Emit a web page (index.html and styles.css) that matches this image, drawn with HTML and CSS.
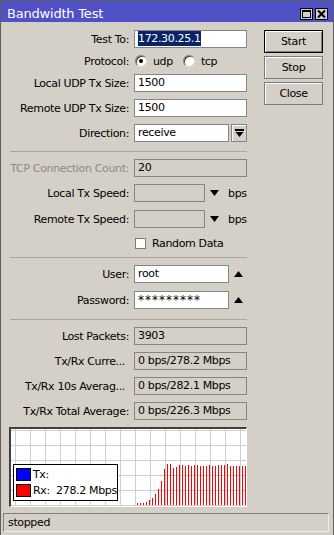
FILE: index.html
```html
<!DOCTYPE html>
<html>
<head>
<meta charset="utf-8">
<link rel="stylesheet" href="styles.css">
</head>
<body>
<div class="window">
  <div class="titlebar">
    <span class="title">Bandwidth Test</span>
    <div class="tbtns">
      <span class="tbtn"><svg width="11" height="10" viewBox="0 0 11 10"><rect x="1.5" y="1.5" width="8" height="7" fill="none" stroke="#000" stroke-width="1"/><rect x="1" y="1" width="9" height="2" fill="#000"/></svg></span>
      <span class="tbtn"><svg width="11" height="10" viewBox="0 0 11 10"><path d="M2 1.5 L9 8.5 M9 1.5 L2 8.5" stroke="#000" stroke-width="2"/></svg></span>
    </div>
  </div>
  <div class="body">
    <div class="form">
      <div class="row"><span class="lbl">Test To:</span><div class="field w-full"><span class="sel">172.30.25.1</span></div></div>
      <div class="row row-radio"><span class="lbl">Protocol:</span><span class="radio on"></span><span class="rtext">udp</span><span class="radio"></span><span class="rtext">tcp</span></div>
      <div class="row"><span class="lbl">Local UDP Tx Size:</span><div class="field w-full">1500</div></div>
      <div class="row"><span class="lbl">Remote UDP Tx Size:</span><div class="field w-full">1500</div></div>
      <div class="row"><span class="lbl">Direction:</span><div class="field w-mid">receive</div><span class="dropbtn"><svg width="9" height="9" viewBox="0 0 9 9"><rect x="0" y="0" width="9" height="2" fill="#000"/><path d="M0.5 3 L8.5 3 L4.5 8 Z" fill="#000"/></svg></span></div>
      <div class="sep sep1"></div>
      <div class="row"><span class="lbl dis">TCP Connection Count:</span><div class="field w-full ro">20</div></div>
      <div class="row"><span class="lbl">Local Tx Speed:</span><div class="field w-short ro"></div><svg class="arrow-dn" width="9" height="6" viewBox="0 0 9 6"><path d="M0 0 L9 0 L4.5 6 Z" fill="#000"/></svg><span class="unit">bps</span></div>
      <div class="row row-rts"><span class="lbl">Remote Tx Speed:</span><div class="field w-short ro"></div><svg class="arrow-dn" width="9" height="6" viewBox="0 0 9 6"><path d="M0 0 L9 0 L4.5 6 Z" fill="#000"/></svg><span class="unit">bps</span></div>
      <div class="row row-check"><span class="lbl"></span><span class="check"></span><span class="ctext">Random Data</span></div>
      <div class="sep sep2"></div>
      <div class="row"><span class="lbl">User:</span><div class="field w-mid">root</div><svg class="arrow-up" width="9" height="6" viewBox="0 0 9 6"><path d="M0 6 L9 6 L4.5 0 Z" fill="#000"/></svg></div>
      <div class="row row-pw"><span class="lbl">Password:</span><div class="field w-mid pw">*********</div><svg class="arrow-up" width="9" height="6" viewBox="0 0 9 6"><path d="M0 6 L9 6 L4.5 0 Z" fill="#000"/></svg></div>
      <div class="sep sep3"></div>
      <div class="row"><span class="lbl">Lost Packets:</span><div class="field w-full ro">3903</div></div>
      <div class="row"><span class="lbl lbl-trunc">Tx/Rx Curre...</span><div class="field w-full ro">0 bps/278.2 Mbps</div></div>
      <div class="row"><span class="lbl lbl-trunc">Tx/Rx 10s Averag...</span><div class="field w-full ro">0 bps/282.1 Mbps</div></div>
      <div class="row"><span class="lbl">Tx/Rx Total Average:</span><div class="field w-full ro">0 bps/226.3 Mbps</div></div>
      <div class="graph">
        <svg width="235" height="77" viewBox="0 0 235 77" shape-rendering="crispEdges">
          <g stroke="#cfcfcf" stroke-width="1">
            <path d="M4.5 0V77M19.5 0V77M34.5 0V77M49.5 0V77M64.5 0V77M79.5 0V77M94.5 0V77M109.5 0V77M124.5 0V77M139.5 0V77M154.5 0V77M169.5 0V77M184.5 0V77M199.5 0V77M214.5 0V77M229.5 0V77"/>
            <path d="M0 1.5H235M0 16.5H235M0 31.5H235M0 46.5H235M0 61.5H235M0 76.5H235"/>
          </g>
          <g fill="#ff0000">
            <rect x="126" y="74" width="1" height="2"/>
            <rect x="129" y="74" width="1" height="2"/>
            <rect x="132" y="74" width="1" height="2"/>
            <rect x="135" y="73" width="1" height="3"/>
            <rect x="138" y="71" width="1" height="5"/>
            <rect x="141" y="69" width="1" height="7"/>
            <rect x="144" y="65" width="1" height="11"/>
            <rect x="147" y="60" width="1" height="16"/>
            <rect x="150" y="52" width="1" height="24"/>
            <rect x="153" y="40" width="1" height="36"/>
            <rect x="156" y="35" width="1" height="41"/>
            <rect x="159" y="35" width="1" height="41"/>
            <rect x="162" y="39" width="1" height="37"/>
            <rect x="165" y="38" width="1" height="38"/>
            <rect x="168" y="36" width="1" height="40"/>
            <rect x="171" y="36" width="1" height="40"/>
            <rect x="174" y="37" width="1" height="39"/>
            <rect x="177" y="36" width="1" height="40"/>
            <rect x="180" y="37" width="1" height="39"/>
            <rect x="183" y="36" width="1" height="40"/>
            <rect x="186" y="36" width="1" height="40"/>
            <rect x="189" y="37" width="1" height="39"/>
            <rect x="192" y="37" width="1" height="39"/>
            <rect x="195" y="37" width="1" height="39"/>
            <rect x="198" y="36" width="1" height="40"/>
            <rect x="201" y="37" width="1" height="39"/>
            <rect x="204" y="37" width="1" height="39"/>
            <rect x="207" y="36" width="1" height="40"/>
            <rect x="210" y="36" width="1" height="40"/>
            <rect x="213" y="36" width="1" height="40"/>
            <rect x="216" y="35" width="1" height="41"/>
            <rect x="219" y="37" width="1" height="39"/>
            <rect x="222" y="37" width="1" height="39"/>
            <rect x="225" y="37" width="1" height="39"/>
            <rect x="228" y="37" width="1" height="39"/>
            <rect x="231" y="37" width="1" height="39"/>
            <rect x="234" y="37" width="1" height="39"/>
          </g>
        </svg>
        <div class="legend">
          <div class="lrow"><span class="sw tx"></span><span>Tx:</span></div>
          <div class="lrow"><span class="sw rx"></span><span>Rx:&nbsp;&nbsp;278.2 Mbps</span></div>
        </div>
      </div>
    </div>
    <div class="buttons">
      <div class="btn default">Start</div>
      <div class="btn">Stop</div>
      <div class="btn">Close</div>
    </div>
  </div>
  <div class="status">stopped</div>
</div>
</body>
</html>
```
FILE: styles.css
```css
* { box-sizing: border-box; }
html, body { margin: 0; padding: 0; }
body {
  width: 334px;
  height: 535px;
  overflow: hidden;
  background: #d4d0c8;
  font-family: "DejaVu Sans", sans-serif;
  font-size: 11px;
  letter-spacing: -0.35px;
  color: #000;
}
.window {
  width: 334px;
  height: 535px;
  border: 1px solid #5e5e5e;
  border-bottom: none;
  background: #d4d0c8;
  display: flex;
  flex-direction: column;
}
.titlebar {
  height: 21px;
  flex: none;
  background: #5050c8;
  color: #fff;
  display: flex;
  align-items: center;
  justify-content: space-between;
  padding: 4px 5px 0 6px;
}
.title { font-size: 13px; letter-spacing: -0.2px; }
.tbtns { display: flex; gap: 2px; }
.tbtn {
  width: 13px;
  height: 12px;
  border: 1px solid #000;
  background: #d4d0c8;
  display: flex;
  align-items: center;
  justify-content: center;
}
.tbtn svg { display: block; }
.body {
  display: flex;
  gap: 17px;
  padding: 8px 0 0 8px;
}
.form {
  width: 238px;
  display: flex;
  flex-direction: column;
  gap: 7px;
}
.row {
  display: flex;
  align-items: center;
  height: 18px;
}
.lbl {
  width: 120px;
  flex: none;
  margin-right: 5px;
  text-align: right;
  white-space: nowrap;
}
.lbl-trunc { padding-right: 4px; }
.dis { color: #8d8a84; }
.field {
  flex: none;
  height: 18px;
  border: 1px solid #858585;
  background: #fff;
  padding: 0 3px;
  line-height: 16px;
  white-space: nowrap;
  overflow: hidden;
}
.w-full { width: 113px; }
.w-mid { width: 95px; }
.w-short { width: 71px; }
.ro { background: #d4d0c8; }
.sel { background: #0a246a; color: #fff; padding: 1px 0; }
.pw { font-size: 12px; letter-spacing: 1px; }
.dropbtn {
  width: 16px;
  height: 18px;
  margin-left: 2px;
  border: 1px solid #858585;
  box-shadow: inset 1px 1px #fff;
  background: #d4d0c8;
  display: flex;
  align-items: center;
  justify-content: center;
}
.dropbtn svg { display: block; }
.row-radio { height: 12px; }
.radio {
  width: 12px;
  height: 12px;
  border-radius: 50%;
  background: #fff;
  border: 1px solid #7a7a7a;
  border-right-color: #dcdcdc;
  border-bottom-color: #dcdcdc;
  box-shadow: inset 1px 1px #404040;
  margin-left: 1px;
  position: relative;
  flex: none;
}
.radio.on::after {
  content: "";
  position: absolute;
  left: 3px;
  top: 3px;
  width: 4px;
  height: 4px;
  border-radius: 50%;
  background: #000;
}
.rtext { margin-left: 6px; margin-right: 10px; }
.rtext:last-child { margin-right: 0; }
.radio + .rtext + .radio { margin-left: 0; }
.arrow-dn { margin-left: 5px; flex: none; }
.arrow-up { margin-left: 5px; flex: none; }
.unit { margin-left: 9px; }
.row-rts { margin-top: 1px; }
.row-check { height: 11px; margin-top: 3px; }
.check {
  width: 11px;
  height: 11px;
  border: 1px solid #7a7a7a;
  background: #fff;
  margin-left: 1px;
  flex: none;
}
.ctext { margin-left: 6px; }
.row-pw { margin-top: 1px; }
.sep { border-bottom: 1px solid #aaa69e; margin-left: 1px; }
.sep1 { height: 3px; }
.sep2 { height: 2px; }
.sep3 { height: 4px; }
.graph {
  position: relative;
  width: 238px;
  height: 80px;
  border-top: 2px solid #404040;
  border-left: 2px solid #404040;
  border-right: 1px solid #ffffff;
  border-bottom: 1px solid #ffffff;
  background: #fff;
}
.graph svg { display: block; }
.legend {
  position: absolute;
  left: 2px;
  top: 35px;
  width: 105px;
  height: 37px;
  border: 1px solid #000;
  background: #fff;
  padding: 3px 0 0 2px;
  display: flex;
  flex-direction: column;
  gap: 3px;
}
.lrow { display: flex; align-items: center; height: 13px; gap: 2px; }
.sw { width: 15px; height: 13px; border: 1px solid #000; flex: none; }
.sw.tx { background: #0000ff; }
.sw.rx { background: #ff0000; }
.buttons {
  width: 59px;
  display: flex;
  flex-direction: column;
  gap: 3px;
}
.btn {
  height: 23px;
  border: 1px solid #7a7a7a;
  box-shadow: inset 1px 1px #ffffff;
  display: flex;
  align-items: center;
  justify-content: center;
}
.btn.default {
  border-color: #000;
  box-shadow: inset 1px 1px #ffffff, inset -1px -1px #808080;
}
.status {
  margin: 6px 4px 0 2px;
  height: 19px;
  border: 1px solid #808080;
  border-right-color: #ececec;
  border-bottom-color: #ececec;
  padding-left: 4px;
  line-height: 17px;
}
```
